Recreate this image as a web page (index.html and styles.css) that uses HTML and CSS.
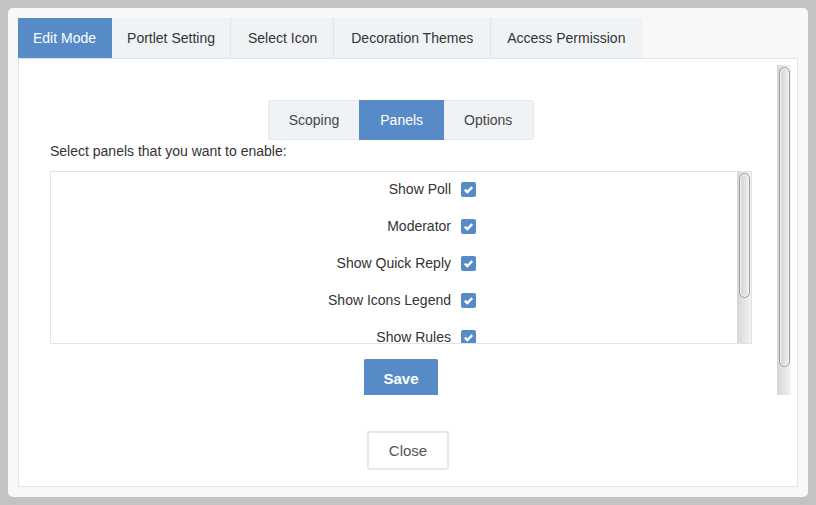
FILE: index.html
```html
<!DOCTYPE html>
<html>
<head>
<meta charset="utf-8">
<link rel="stylesheet" href="styles.css">
</head>
<body>
<div class="dialog">
  <div class="tabs">
    <div class="tab active">Edit Mode</div>
    <div class="tab">Portlet Setting</div>
    <div class="tab t-icon">Select Icon</div>
    <div class="tab t-deco">Decoration Themes</div>
    <div class="tab t-acc">Access Permission</div>
  </div>
  <div class="tab-content">
    <div class="scroll">
      <div class="pane">
        <div class="inner">
          <div class="subtabs">
            <div class="subtab">Scoping</div>
            <div class="subtab active">Panels</div>
            <div class="subtab">Options</div>
          </div>
          <div class="hint">Select panels that you want to enable:</div>
          <div class="list">
            <div class="list-pane">
              <div class="row"><span class="label">Show Poll</span><span class="check"><svg viewBox="0 0 15 15" width="15" height="15"><path d="M3.8 7.6l2.5 2.5 4.9-4.9" fill="none" stroke="#fff" stroke-width="2.4"/></svg></span></div>
              <div class="row"><span class="label">Moderator</span><span class="check"><svg viewBox="0 0 15 15" width="15" height="15"><path d="M3.8 7.6l2.5 2.5 4.9-4.9" fill="none" stroke="#fff" stroke-width="2.4"/></svg></span></div>
              <div class="row"><span class="label">Show Quick Reply</span><span class="check"><svg viewBox="0 0 15 15" width="15" height="15"><path d="M3.8 7.6l2.5 2.5 4.9-4.9" fill="none" stroke="#fff" stroke-width="2.4"/></svg></span></div>
              <div class="row"><span class="label">Show Icons Legend</span><span class="check"><svg viewBox="0 0 15 15" width="15" height="15"><path d="M3.8 7.6l2.5 2.5 4.9-4.9" fill="none" stroke="#fff" stroke-width="2.4"/></svg></span></div>
              <div class="row"><span class="label">Show Rules</span><span class="check"><svg viewBox="0 0 15 15" width="15" height="15"><path d="M3.8 7.6l2.5 2.5 4.9-4.9" fill="none" stroke="#fff" stroke-width="2.4"/></svg></span></div>
              <div class="row"><span class="label">Show Forum Jump</span><span class="check"><svg viewBox="0 0 15 15" width="15" height="15"><path d="M3.8 7.6l2.5 2.5 4.9-4.9" fill="none" stroke="#fff" stroke-width="2.4"/></svg></span></div>
            </div>
            <div class="track small"><div class="thumb"></div></div>
          </div>
          <div class="actions"><button class="btn-save">Save</button></div>
        </div>
      </div>
      <div class="track big"><div class="thumb"></div></div>
    </div>
    <div class="footer"><button class="btn-close">Close</button></div>
  </div>
</div>
</body>
</html>
```
FILE: styles.css
```css
* { box-sizing: border-box; }
html, body { margin: 0; }
body {
  background: #c3c3c3;
  padding: 8px;
  font-family: "Liberation Sans", Arial, sans-serif;
  font-size: 14px;
  color: #333;
}
.dialog {
  width: 800px;
  height: 489px;
  background: #f8f8f8;
  border-radius: 5px;
  padding: 10px;
  display: flex;
  flex-direction: column;
}
.tabs {
  display: flex;
  height: 40px;
}
.tab {
  background: #f0f3f6;
  padding: 0 15px;
  border-right: 1px solid #dfe5eb;
  display: flex;
  align-items: center;
  color: #333;
}
.tab.active {
  background: #578bc8;
  color: #fff;
  border-right-color: #578bc8;
}
.tab.t-icon { padding: 0 16px 0 17px; }
.tab.t-deco { padding: 0 17px 0 17px; }
.tab.t-acc { border-right: none; padding: 0 18px 0 16px; }
.tab-content {
  flex: 1;
  background: #fff;
  border: 1px solid #dfe5eb;
  display: flex;
  flex-direction: column;
}
.scroll {
  margin: 6px 6px 0 6px;
  height: 330px;
  display: flex;
}
.pane {
  flex: 1;
  overflow: hidden;
}
.track {
  width: 14px;
  flex: none;
  background: linear-gradient(to right, #d6d6d6, #f3f3f3);
  padding: 2px 1px 0 2px;
}
.thumb {
  border: 1px solid #9a9a9a;
  border-radius: 6px;
  background: linear-gradient(to right, #d2d2d2, #efefef);
  box-shadow: inset 0 0 0 1px #f6f6f6;
}
.track.big .thumb { height: 300px; }
.track.small { padding-top: 1px; }
.track.small .thumb { height: 125px; }
.inner {
  padding: 35px 25px 32px 25px;
}
.subtabs {
  display: flex;
  justify-content: center;
  height: 40px;
}
.subtab {
  background: #f0f3f6;
  border: 1px solid #e3e8ee;
  padding: 0 20px;
  display: flex;
  align-items: center;
  color: #444;
}
.subtab:first-child { border-radius: 3px 0 0 3px; border-right: none; }
.subtab:last-child { border-radius: 0 3px 3px 0; border-left: none; padding-right: 21px; }
.subtab.active {
  background: #578bc8;
  border-color: #578bc8;
  color: #fff;
}
.hint {
  margin-top: 3px;
  line-height: 17px;
  color: #333;
}
.list {
  margin-top: 11px;
  height: 173px;
  border: 1px solid #dfe5eb;
  display: flex;
}
.list-pane {
  flex: 1;
  overflow: hidden;
}
.row {
  height: 37px;
  padding-bottom: 3px;
  display: grid;
  grid-template-columns: 400px 15px;
  column-gap: 10px;
  align-items: center;
}
.label {
  text-align: right;
  color: #333;
}
.check {
  width: 15px;
  height: 15px;
  background: #578bc8;
  border-radius: 2px;
  display: block;
}
.check svg { display: block; }
.actions {
  display: flex;
  justify-content: center;
  margin-top: 15px;
}
.btn-save {
  font-family: "Liberation Sans", Arial, sans-serif;
  font-size: 15px;
  font-weight: bold;
  color: #fff;
  background: #578bc8;
  border: none;
  border-radius: 2px;
  width: 74px;
  height: 38px;
  padding: 0;
}
.footer {
  display: flex;
  justify-content: center;
  padding-top: 36px;
}
.btn-close {
  font-family: "Liberation Sans", Arial, sans-serif;
  font-size: 15px;
  color: #555;
  background: #fff;
  border: 2px solid #e3e8ee;
  border-radius: 3px;
  width: 82px;
  height: 39px;
  padding: 0;
}
```
